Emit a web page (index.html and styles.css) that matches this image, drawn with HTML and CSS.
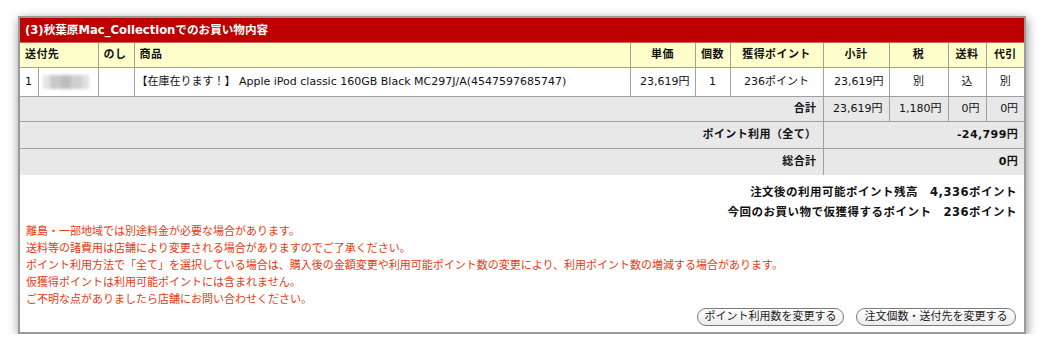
FILE: index.html
```html
<!DOCTYPE html>
<html lang="ja">
<head>
<meta charset="utf-8">
<link rel="stylesheet" href="styles.css">
</head>
<body>
<div class="panel">
  <table class="cart">
    <colgroup>
      <col class="c1"><col class="c2"><col class="c3"><col class="c4"><col class="c5"><col class="c6"><col class="c7"><col class="c8"><col class="c9"><col class="c10"><col class="c11">
    </colgroup>
    <tr class="title"><th colspan="11">(3)秋葉原Mac_Collectionでのお買い物内容</th></tr>
    <tr class="head">
      <th colspan="2" class="l">送付先</th>
      <th class="l">のし</th>
      <th class="l">商品</th>
      <th>単価</th>
      <th>個数</th>
      <th>獲得ポイント</th>
      <th>小計</th>
      <th>税</th>
      <th>送料</th>
      <th>代引</th>
    </tr>
    <tr class="item">
      <td class="l">1</td>
      <td><div class="blur"></div></td>
      <td></td>
      <td class="l prod">【在庫在ります！】 Apple iPod classic 160GB Black MC297J/A(4547597685747)</td>
      <td class="r">23,619円</td>
      <td>1</td>
      <td>236ポイント</td>
      <td class="r">23,619円</td>
      <td>別</td>
      <td>込</td>
      <td>別</td>
    </tr>
    <tr class="sum">
      <th colspan="7" class="r">合計</th>
      <td class="r">23,619円</td>
      <td class="r">1,180円</td>
      <td class="r">0円</td>
      <td class="r">0円</td>
    </tr>
    <tr class="sum tall">
      <th colspan="7" class="r">ポイント利用（全て）</th>
      <th colspan="4" class="r">-24,799円</th>
    </tr>
    <tr class="sum tall">
      <th colspan="7" class="r">総合計</th>
      <th colspan="4" class="r">0円</th>
    </tr>
  </table>
  <div class="foot">
    <div class="points">
      <p>注文後の利用可能ポイント残高　4,336ポイント</p>
      <p>今回のお買い物で仮獲得するポイント　236ポイント</p>
    </div>
    <div class="notes">
      <p>離島・一部地域では別途料金が必要な場合があります。</p>
      <p>送料等の諸費用は店舗により変更される場合がありますのでご了承ください。</p>
      <p>ポイント利用方法で「全て」を選択している場合は、購入後の金額変更や利用可能ポイント数の変更により、利用ポイント数の増減する場合があります。</p>
      <p>仮獲得ポイントは利用可能ポイントには含まれません。</p>
      <p>ご不明な点がありましたら店舗にお問い合わせください。</p>
    </div>
    <div class="buttons">
      <button class="btn b1">ポイント利用数を変更する</button>
      <button class="btn b2">注文個数・送付先を変更する</button>
    </div>
  </div>
</div>
</body>
</html>
```

FILE: styles.css
```css
html, body {
  margin: 0;
  padding: 0;
  background: #fff;
}
body {
  font-family: "DejaVu Sans", "Noto Sans CJK JP", sans-serif;
  font-size: 11px;
  color: #111;
}
.panel {
  margin: 16px 0 0 18px;
  width: 1004px;
  height: 314px;
  border: 2px solid #9a9a9a;
  background: #fff;
  box-shadow: 1px 3px 10px rgba(0,0,0,0.45);
  display: flex;
  flex-direction: column;
  overflow: hidden;
}
.cart {
  width: 1004px;
  table-layout: fixed;
  border-collapse: collapse;
  border-style: hidden;
}
.c1 { width: 18px; }
.c2 { width: 60px; }
.c3 { width: 36px; }
.c4 { width: 496px; }
.c5 { width: 65px; }
.c6 { width: 35px; }
.c7 { width: 93px; }
.c8 { width: 66px; }
.c9 { width: 59px; }
.c10 { width: 38px; }
.c11 { width: 38px; }
.cart th, .cart td {
  border: 1px solid #a0a0a0;
  padding: 0 5px;
  text-align: center;
  white-space: nowrap;
  overflow: hidden;
  line-height: 14px;
}
.cart th { font-weight: bold; letter-spacing: 0.4px; }
.cart .l { text-align: left; }
.cart .r { text-align: right; }
.title th {
  background: #bd0000;
  color: #fff;
  text-align: left;
  height: 24px;
  font-size: 11.6px;
  letter-spacing: 0;
  border-color: #c66;
}
.head th {
  background: #ffffcc;
  height: 24px;
}
.item td {
  height: 28px;
  background: #fff;
}
.item td.prod { padding-left: 2px; }
.item td:first-child { padding-left: 5px; }
.blur {
  width: 46px;
  height: 14px;
  margin: 0 auto 0 -1px;
  background: linear-gradient(90deg, #e4e4e4 0 15%, #c9c9c9 15% 40%, #bdbdbd 40% 60%, #cfcfcf 60% 85%, #e0e0e0 85%);
  filter: blur(1.5px);
}
.sum th, .sum td {
  background: #e8e8e8;
  height: 24px;
  padding-right: 6px;
}
.sum.tall th, .sum.tall td { height: 26px; }
.foot {
  flex: 1;
  display: flex;
  flex-direction: column;
  padding: 7px 7px 0 6px;
}
.foot p { margin: 0; }
.points {
  text-align: right;
  font-weight: bold;
  font-size: 11.5px;
  letter-spacing: 0.5px;
  line-height: 20px;
}
.notes {
  color: #e63a12;
  line-height: 17px;
  margin-top: 1px;
}
.buttons {
  display: flex;
  justify-content: flex-end;
  gap: 12px;
  margin-top: 0;
  padding-right: 1px;
}
.btn {
  font-family: "DejaVu Sans", "Noto Sans CJK JP", sans-serif;
  font-size: 11px;
  color: #222;
  height: 18px;
  line-height: 16px;
  padding: 0;
  white-space: nowrap;
  border: 1px solid #7a7a7a;
  border-radius: 9px;
  background: linear-gradient(#ffffff, #ececec);
}
.b1 { width: 147px; }
.b2 { width: 160px; }
```
